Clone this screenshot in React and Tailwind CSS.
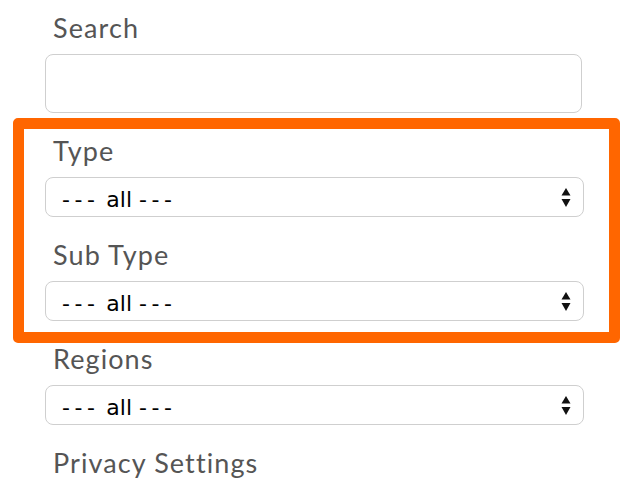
import React from 'react';

// Up/down arrows drawn on the right of each select
const SelectArrows = () => (
    <svg width="10" height="19" viewBox="0 0 10 19" className="shrink-0">
        <path d="M5 0 L9.5 7.5 L0.5 7.5 Z" fill="#111" />
        <path d="M5 19 L9.5 11 L0.5 11 Z" fill="#111" />
    </svg>
);

const Label = ({ children }) => (
    <div className="pl-2 text-[27px] leading-[32px] text-[#555] font-['Lato',sans-serif] tracking-[1.1px]">
        {children}
    </div>
);

const FakeSelect = () => (
    <div className="mt-2.5 h-10 rounded-lg border border-[#cfcfcf] bg-white flex items-center justify-between pl-4 pr-3 font-['DejaVu_Sans',sans-serif] text-[22px] text-black">
        <span className="whitespace-pre pt-1">
            <span className="tracking-[4.5px]">---</span>
            <span> all </span>
            <span className="tracking-[4.5px]">---</span>
        </span>
        <SelectArrows />
    </div>
);

export default function App() {
    return (
        <div className="w-[640px] h-[480px] bg-white overflow-hidden pt-3">
            <div className="pl-[45px] pr-[58px]">
                <Label>Search</Label>
                <div className="mt-2.5 h-[59px] rounded-lg border border-[#cfcfcf] bg-white" />
            </div>

            <div className="mt-[5px] ml-[13px] w-[607px] border-[11px] border-[#ff6600] rounded-[5px] pt-1.5 pb-[11px] pl-[21px] pr-[25px]">
                <Label>Type</Label>
                <FakeSelect />
                <div className="mt-[22px]">
                    <Label>Sub Type</Label>
                </div>
                <FakeSelect />
            </div>

            <div className="pl-[45px] pr-[56px]">
                <Label>Regions</Label>
                <FakeSelect />
                <div className="mt-[22px]">
                    <Label>Privacy Settings</Label>
                </div>
            </div>
        </div>
    );
}
